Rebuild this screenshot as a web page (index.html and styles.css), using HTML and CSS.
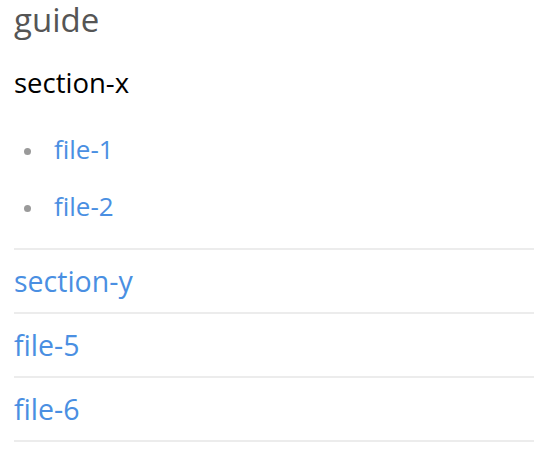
FILE: index.html
```html
<!DOCTYPE html>
<html>
<head>
<meta charset="utf-8">
<link rel="stylesheet" href="styles.css">
</head>
<body>
<nav class="toc">
  <h1 class="toc-title">guide</h1>
  <div class="group">
    <div class="group-title">section-x</div>
    <ul class="file-list">
      <li><a href="#">file-1</a></li>
      <li><a href="#">file-2</a></li>
    </ul>
  </div>
  <div class="row"><a href="#">section-y</a></div>
  <div class="row"><a href="#">file-5</a></div>
  <div class="row"><a href="#">file-6</a></div>
</nav>
</body>
</html>
```
FILE: styles.css
```css
html, body {
  margin: 0;
  padding: 0;
  background: #fff;
}
body {
  font-family: "Open Sans", "Noto Sans", sans-serif;
}
.toc {
  width: 520px;
  padding: 0 14px;
}
.toc-title {
  margin: 0;
  font-size: 33px;
  font-weight: 400;
  color: #555;
  line-height: 40px;
}
.group {
  border-bottom: 2px solid #ececec;
  padding-bottom: 13px;
}
.group-title {
  font-size: 27.5px;
  color: #000;
  line-height: 40px;
  padding-top: 23px;
}
.file-list {
  list-style: none;
  margin: 0;
  padding: 18px 0 0 40px;
}
.file-list li {
  font-size: 26px;
  line-height: 57px;
}
.file-list li::before {
  content: "";
  display: inline-block;
  width: 7px;
  height: 7px;
  border-radius: 50%;
  background: #9a9a9a;
  margin: 0 23px 0 -30px;
  vertical-align: 4.5px;
}
a {
  color: #4a8fe2;
  text-decoration: none;
}
.row {
  height: 51px;
  padding-top: 11px;
  border-bottom: 2px solid #ececec;
  font-size: 28.5px;
  line-height: 40px;
}
```
